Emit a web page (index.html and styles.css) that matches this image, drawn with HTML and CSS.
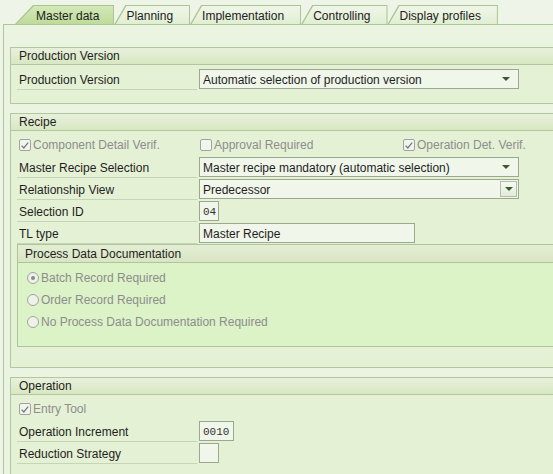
FILE: index.html
```html
<!DOCTYPE html>
<html>
<head>
<meta charset="utf-8">
<link rel="stylesheet" href="styles.css">
</head>
<body>
<div class="screen">
  <div class="tabstrip">
    <div class="tab active"><span>Master data</span></div>
    <div class="tab"><span>Planning</span></div>
    <div class="tab"><span>Implementation</span></div>
    <div class="tab"><span>Controlling</span></div>
    <div class="tab"><span>Display profiles</span></div>
  </div>
  <div class="panel">
    <section class="group">
      <div class="group-head">Production Version</div>
      <div class="group-body">
        <div class="row">
          <div class="lbl">Production Version</div>
          <div class="field w320"><span class="val">Automatic selection of production version</span><i class="arrow"></i></div>
        </div>
      </div>
    </section>

    <section class="group">
      <div class="group-head">Recipe</div>
      <div class="group-body">
        <div class="row">
          <div class="chk c1"><span class="cb"><svg viewBox="0 0 12 12" width="11" height="11"><path d="M2 6.2 L4.6 8.9 L9.8 2.6" fill="none" stroke="#7b7b7b" stroke-width="1.6"/></svg></span>Component Detail Verif.</div>
          <div class="chk c2"><span class="cb"></span>Approval Required</div>
          <div class="chk"><span class="cb"><svg viewBox="0 0 12 12" width="11" height="11"><path d="M2 6.2 L4.6 8.9 L9.8 2.6" fill="none" stroke="#7b7b7b" stroke-width="1.6"/></svg></span>Operation Det. Verif.</div>
        </div>
        <div class="row">
          <div class="lbl">Master Recipe Selection</div>
          <div class="field w320"><span class="val">Master recipe mandatory (automatic selection)</span><i class="arrow"></i></div>
        </div>
        <div class="row">
          <div class="lbl">Relationship View</div>
          <div class="field w320"><span class="val">Predecessor</span><span class="ddbtn"><i class="arrow"></i></span></div>
        </div>
        <div class="row">
          <div class="lbl">Selection ID</div>
          <div class="field w20 mono"><span class="val">04</span></div>
        </div>
        <div class="row">
          <div class="lbl">TL type</div>
          <div class="field w216"><span class="val">Master Recipe</span></div>
        </div>
        <section class="subgroup">
          <div class="group-head sub-head">Process Data Documentation</div>
          <div class="sub-body">
            <div class="row"><div class="chk"><span class="rb on"></span>Batch Record Required</div></div>
            <div class="row"><div class="chk"><span class="rb"></span>Order Record Required</div></div>
            <div class="row"><div class="chk"><span class="rb"></span>No Process Data Documentation Required</div></div>
          </div>
        </section>
      </div>
    </section>

    <section class="group">
      <div class="group-head">Operation</div>
      <div class="group-body">
        <div class="row">
          <div class="chk c1"><span class="cb"><svg viewBox="0 0 12 12" width="11" height="11"><path d="M2 6.2 L4.6 8.9 L9.8 2.6" fill="none" stroke="#7b7b7b" stroke-width="1.6"/></svg></span>Entry Tool</div>
        </div>
        <div class="row">
          <div class="lbl">Operation Increment</div>
          <div class="field w35 mono"><span class="val">0010</span></div>
        </div>
        <div class="row">
          <div class="lbl">Reduction Strategy</div>
          <div class="field w20"></div>
        </div>
      </div>
    </section>
  </div>
</div>
</body>
</html>
```

FILE: styles.css
```css
html, body {
  margin: 0;
  height: 474px;
  overflow: hidden;
}
body {
  background: #eef4e8;
  font-family: "Liberation Sans", Arial, sans-serif;
  font-size: 12px;
  color: #1e1e1e;
}
.screen {
  padding-left: 3px;
}
.tabstrip {
  display: flex;
  align-items: flex-end;
  height: 24px;
  padding-left: 12px;
}
.tab {
  height: 19px;
  box-sizing: border-box;
  padding: 1px 1px 0 0;
  background: #a9c591;
  clip-path: polygon(11px 0, 100% 0, 100% 100%, 0 100%);
}
.tab span {
  display: flex;
  align-items: center;
  height: 100%;
  padding: 1px 16px 0 12px;
  box-sizing: border-box;
  background: linear-gradient(#f0f6e8, #e1eed3);
  clip-path: polygon(12px 0, 100% 0, 100% 100%, 1.5px 100%);
  white-space: nowrap;
  color: #222;
}
.tab.active {
  clip-path: polygon(18px 0, 100% 0, 100% 100%, 0 100%);
}
.tab.active span {
  padding: 1px 14px 0 21px;
  background: linear-gradient(#d3e8b8, #bedb9b);
  clip-path: polygon(19px 0, 100% 0, 100% 100%, 1.5px 100%);
}
.panel {
  border-top: 1px solid #a9c591;
  border-left: 1px solid #b0c69d;
  background: #ebf4e1;
  padding: 22px 0 0 6px;
  margin-right: -40px;
  height: 480px;
}
.group {
  border: 1px solid #b2c79e;
  background: #e5f1d5;
  margin-bottom: 9px;
}
.group-head {
  height: 16px;
  line-height: 17px;
  padding-left: 8px;
  border-bottom: 1px solid #b2c79e;
  background: linear-gradient(#e8f0dc, #d8e8c2);
}
.group-body {
  padding: 3px 0 13px 6px;
}
.row {
  display: flex;
  align-items: center;
  height: 22px;
}
.lbl {
  width: 180px;
  height: 22px;
  box-sizing: border-box;
  line-height: 25px;
  padding-left: 2px;
  margin-right: 2px;
  border-bottom: 1px solid #c6d5b6;
  white-space: nowrap;
}
.field {
  height: 20px;
  box-sizing: border-box;
  border: 1px solid #9ca78f;
  background: #f0f6ea;
  display: flex;
  align-items: center;
  padding-left: 3px;
}
.field .val {
  flex: 1;
  white-space: nowrap;
  overflow: hidden;
  line-height: 18px;
  padding-top: 2px;
}
.w320 { width: 320px; }
.w216 { width: 216px; }
.w35 { width: 35px; }
.w20 { width: 20px; }
.mono {
  font-family: "Liberation Mono", "Courier New", monospace;
  font-size: 11px;
  color: #333;
}
.arrow {
  width: 0;
  height: 0;
  border-left: 4px solid transparent;
  border-right: 4px solid transparent;
  border-top: 4px solid #3b5a2a;
  margin-right: 8px;
}
.ddbtn {
  align-self: stretch;
  width: 15px;
  margin: 1px;
  border: 1px solid #b4bcaa;
  background: linear-gradient(#f6f9f2, #e3ebd9);
  display: flex;
  align-items: center;
  justify-content: center;
}
.ddbtn .arrow {
  margin-right: 0;
}
.chk {
  display: flex;
  align-items: center;
  gap: 2px;
  color: #8d8d8d;
  white-space: nowrap;
  height: 22px;
}
.c1 {
  width: 183px;
  padding-left: 2px;
  box-sizing: border-box;
}
.c2 {
  width: 203px;
}
.cb {
  width: 12px;
  height: 12px;
  box-sizing: border-box;
  border: 1px solid #a2a2a2;
  border-radius: 2px;
  background: #f1f6ec;
  display: flex;
  align-items: center;
  justify-content: center;
}
.rb {
  width: 12px;
  height: 12px;
  box-sizing: border-box;
  border: 1px solid #a3a3a3;
  border-radius: 50%;
  background: #eef3e9;
  display: flex;
  align-items: center;
  justify-content: center;
}
.rb.on::after {
  content: "";
  width: 4px;
  height: 4px;
  border-radius: 50%;
  background: #8a8a8a;
}
.subgroup {
  border: 1px solid #aec49b;
  background: #dcf2c7;
  margin-bottom: 7px;
}
.sub-head {
  height: 17px;
  line-height: 18px;
  padding-left: 7px;
  border-bottom-color: #aec49b;
  background: linear-gradient(#e4edd3, #d9e5c4);
}
.sub-body {
  padding: 4px 0 13px 9px;
}
```
